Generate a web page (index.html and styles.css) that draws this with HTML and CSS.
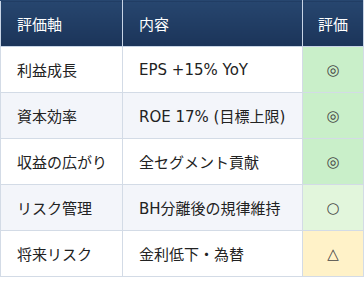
FILE: index.html
```html
<!DOCTYPE html>
<html lang="ja">
<head>
<meta charset="utf-8">
<link rel="stylesheet" href="styles.css">
</head>
<body>
<table class="eval">
  <thead>
    <tr><th class="c1">評価軸</th><th class="c2">内容</th><th class="c3">評価</th></tr>
  </thead>
  <tbody>
    <tr><td>利益成長</td><td>EPS +15% YoY</td><td class="mark good">◎</td></tr>
    <tr class="alt"><td>資本効率</td><td>ROE 17% (目標上限)</td><td class="mark good">◎</td></tr>
    <tr><td>収益の広がり</td><td>全セグメント貢献</td><td class="mark good">◎</td></tr>
    <tr class="alt"><td>リスク管理</td><td>BH分離後の規律維持</td><td class="mark ok">○</td></tr>
    <tr><td>将来リスク</td><td>金利低下・為替</td><td class="mark warn">△</td></tr>
  </tbody>
</table>
</body>
</html>
```
FILE: styles.css
```css
html, body { margin: 0; padding: 0; background: #ffffff; }
body { font-family: "DejaVu Sans", "Noto Sans CJK JP", sans-serif; }
.eval {
  border-collapse: collapse;
  width: 364px;
  table-layout: fixed;
  font-size: 15px;
  color: #222222;
}
.eval th, .eval td {
  height: 46px;
  padding: 0 0 0 16px;
  text-align: left;
  vertical-align: middle;
  box-sizing: border-box;
  border: 1px solid #d3dbe6;
  font-weight: normal;
  white-space: nowrap;
}
.eval th {
  background: linear-gradient(#27466f, #1b3459);
  color: #ffffff;
  border-color: #c7d4e6;
  border-top-color: #27466f;
}
.eval th.c1 { width: 122px; }
.eval th.c2 { width: 180px; }
.eval th.c3 { text-align: center; padding: 0; }
.eval tr.alt td { background: #f3f5fa; }
.eval td.mark { text-align: center; padding: 0; color: #444; }
.eval tr td.good { background: #c9efc9; }
.eval tr td.ok { background: #e2f6dc; }
.eval tr td.warn { background: #fff2c8; }
```
